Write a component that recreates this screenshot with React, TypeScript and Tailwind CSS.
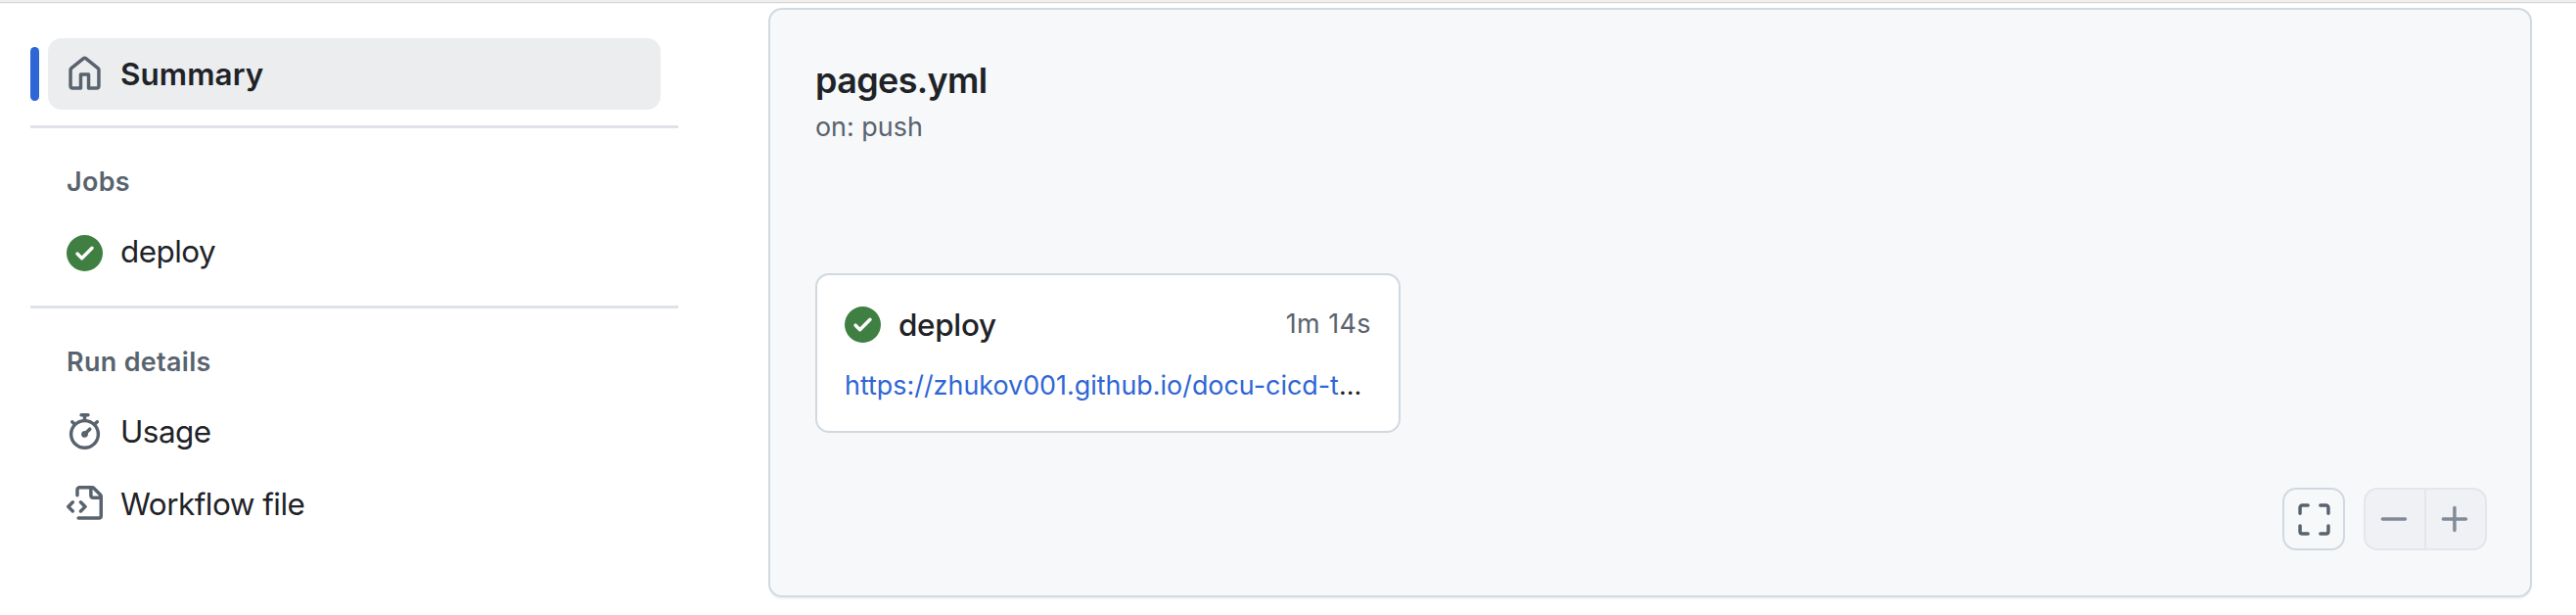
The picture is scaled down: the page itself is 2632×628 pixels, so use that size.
import type { ReactNode } from "react";

const paths = {
  home: "M6.906.664a1.749 1.749 0 0 1 2.187 0l5.25 4.2c.415.332.657.835.657 1.367v7.019A1.75 1.75 0 0 1 13.25 15h-3.5a.75.75 0 0 1-.75-.75V9H7v5.25a.75.75 0 0 1-.75.75h-3.5A1.75 1.75 0 0 1 1 13.25V6.23c0-.531.242-1.034.657-1.366l5.25-4.2Zm1.25 1.171a.25.25 0 0 0-.312 0l-5.25 4.2a.25.25 0 0 0-.094.196v7.019c0 .138.112.25.25.25H5.5V8.25a.75.75 0 0 1 .75-.75h3.5a.75.75 0 0 1 .75.75v5.25h2.75a.25.25 0 0 0 .25-.25V6.23a.25.25 0 0 0-.094-.195Z",
  check: "M8 16A8 8 0 1 1 8 0a8 8 0 0 1 0 16Zm3.78-9.72a.751.751 0 0 0-.018-1.042.751.751 0 0 0-1.042-.018L6.75 9.19 5.28 7.72a.751.751 0 0 0-1.042.018.751.751 0 0 0-.018 1.042l2 2a.75.75 0 0 0 1.06 0Z",
  stopwatch: "M5.75.75A.75.75 0 0 1 6.5 0h3a.75.75 0 0 1 0 1.5h-.75v1l-.001.041a6.724 6.724 0 0 1 3.464 1.435l.007-.006.75-.75a.749.749 0 0 1 1.275.326.749.749 0 0 1-.215.734l-.75.75-.006.007a6.75 6.75 0 1 1-10.548 0L2.72 5.03l-.75-.75a.751.751 0 0 1 .018-1.042.751.751 0 0 1 1.042-.018l.75.75.007.006A6.72 6.72 0 0 1 7.25 2.541V1.5H6.5a.75.75 0 0 1-.75-.75ZM8 14.5a5.25 5.25 0 1 0-.001-10.501A5.25 5.25 0 0 0 8 14.5Zm.389-6.7 1.33-1.33a.75.75 0 1 1 1.061 1.06L9.45 8.861A1.503 1.503 0 0 1 8 10.75a1.499 1.499 0 1 1 .389-2.95Z",
  fileCode: "M4 1.75C4 .784 4.784 0 5.75 0h5.586c.464 0 .909.184 1.237.513l2.914 2.914c.329.328.513.773.513 1.237v8.586A1.75 1.75 0 0 1 14.25 15h-9a.75.75 0 0 1 0-1.5h9a.25.25 0 0 0 .25-.25V6h-2.75A1.75 1.75 0 0 1 10 4.25V1.5H5.75a.25.25 0 0 0-.25.25v2.5a.75.75 0 0 1-1.5 0Zm1.72 4.97a.75.75 0 0 1 1.06 0l2 2a.75.75 0 0 1 0 1.06l-2 2a.749.749 0 0 1-1.275-.326.749.749 0 0 1 .215-.734l1.47-1.47-1.47-1.47a.75.75 0 0 1 0-1.06ZM3.28 7.78 1.81 9.25l1.47 1.47a.751.751 0 0 1-.018 1.042.751.751 0 0 1-1.042.018l-2-2a.75.75 0 0 1 0-1.06l2-2a.751.751 0 0 1 1.042.018.751.751 0 0 1 .018 1.042Zm8.22-6.218V4.25c0 .138.112.25.25.25h2.688l-.011-.013-2.914-2.914-.013-.011Z",
  screenFull: "M1.75 10a.75.75 0 0 1 .75.75v2.5c0 .138.112.25.25.25h2.5a.75.75 0 0 1 0 1.5h-2.5A1.75 1.75 0 0 1 1 13.25v-2.5a.75.75 0 0 1 .75-.75Zm12.5 0a.75.75 0 0 1 .75.75v2.5A1.75 1.75 0 0 1 13.25 15h-2.5a.75.75 0 0 1 0-1.5h2.5a.25.25 0 0 0 .25-.25v-2.5a.75.75 0 0 1 .75-.75ZM2.75 2.5a.25.25 0 0 0-.25.25v2.5a.75.75 0 0 1-1.5 0v-2.5C1 1.784 1.784 1 2.75 1h2.5a.75.75 0 0 1 0 1.5ZM10 1.75a.75.75 0 0 1 .75-.75h2.5c.966 0 1.75.784 1.75 1.75v2.5a.75.75 0 0 1-1.5 0v-2.5a.25.25 0 0 0-.25-.25h-2.5a.75.75 0 0 1-.75-.75Z",
  dash: "M2 7.75A.75.75 0 0 1 2.75 7h10a.75.75 0 0 1 0 1.5h-10A.75.75 0 0 1 2 7.75Z",
  plus: "M7.75 2a.75.75 0 0 1 .75.75V7h4.25a.75.75 0 0 1 0 1.5H8.5v4.25a.75.75 0 0 1-1.5 0V8.5H2.75a.75.75 0 0 1 0-1.5H7V2.75A.75.75 0 0 1 7.75 2Z",
};

function Icon({ name, className }: { name: keyof typeof paths; className: string }) {
  return (
    <svg viewBox="0 0 16 16" fill="currentColor" aria-hidden="true" className={`size-[37px] shrink-0 ${className}`}>
      <path d={paths[name]} />
    </svg>
  );
}

function NavItem({ icon, iconClass, textClass, children }: { icon: keyof typeof paths; iconClass: string; textClass: string; children: ReactNode }) {
  return (
    <a className="ml-[18px] flex h-[73px] w-[626px] items-center gap-[18px] rounded-[14px] pl-[19px] text-[31.4px] tracking-[-0.5px]">
      <Icon name={icon} className={iconClass} />
      <span className={textClass}>{children}</span>
    </a>
  );
}

function Heading({ children }: { children: ReactNode }) {
  return <h3 className="ml-[37px] h-[36px] text-[26.9px] leading-[36px] font-semibold tracking-[0.35px] text-[#59636e]">{children}</h3>;
}

function Sidebar() {
  return (
    <nav className="ml-[31px] w-[662px] shrink-0 pt-[35px]">
      <div className="flex items-center gap-[9px]">
        <span className="h-[55px] w-[9px] rounded-full bg-[#2f66d5]" />
        <a className="flex h-[73px] w-[626px] items-center gap-[18px] rounded-[14px] bg-[#ecedef] pl-[19px] text-[31.4px] font-semibold tracking-[0.1px]">
          <Icon name="home" className="text-[#59636e]" />
          <span className="pt-0.5">Summary</span>
        </a>
      </div>
      <hr className="mt-4 h-[3px] border-0 bg-[#dfe2e8]" />
      <div className="h-[181px] pt-[36px]">
        <Heading>Jobs</Heading>
        <div className="pt-[19px]">
          <NavItem icon="check" iconClass="text-[#3f7f42]" textClass="pb-0.5">deploy</NavItem>
        </div>
      </div>
      <hr className="h-[3px] border-0 bg-[#dfe2e8]" />
      <div className="pt-[36px]">
        <Heading>Run details</Heading>
        <div className="flex flex-col gap-px pt-[17px]">
          <NavItem icon="stopwatch" iconClass="text-[#59636e]" textClass="pt-0.5">Usage</NavItem>
          <NavItem icon="fileCode" iconClass="text-[#59636e]" textClass="pt-0.5">Workflow file</NavItem>
        </div>
      </div>
    </nav>
  );
}

function JobCard() {
  return (
    <div className="mt-[129px] h-[163px] w-[598px] rounded-[14px] border-2 border-[#d1d9e0] bg-white pt-[32px] pr-[28px] pl-[28px]">
      <div className="flex h-[37px] items-center">
        <Icon name="check" className="text-[#3f7f42]" />
        <span className="ml-[18px] pt-[3px] text-[31.4px] font-medium tracking-[-0.3px]">deploy</span>
        <span className="ml-auto pb-0.5 text-[26.9px] tracking-[0.45px] text-[#59636e]">1m 14s</span>
      </div>
      <div className="mt-[23px] text-[26.9px] leading-[40px] whitespace-nowrap">
        <a className="text-[#2f66d5]">https://zhukov001.github.io/docu-cicd-t</a>…
      </div>
    </div>
  );
}

function Controls() {
  return (
    <div className="mt-auto mb-[46px] flex justify-end gap-[19px]">
      <button className="flex size-16 items-center justify-center rounded-[14px] border-2 border-[#d1d9e0] text-[#59636e]">
        <Icon name="screenFull" className="" />
      </button>
      <div className="flex h-16 w-[126px] rounded-[14px] border-2 border-[#e4e6ea] bg-[#eff1f5] text-[#818b98]">
        <button className="flex w-[62px] items-center justify-center border-r-2 border-[#e4e6ea] pr-0.5">
          <Icon name="dash" className="" />
        </button>
        <button className="flex w-[60px] items-center justify-center pr-0.5">
          <Icon name="plus" className="" />
        </button>
      </div>
    </div>
  );
}

export default function App() {
  return (
    <div className="flex h-[628px] w-[2632px] flex-col overflow-hidden bg-white font-['Inter',sans-serif] text-[#1f2328]">
      <div className="h-1 shrink-0 border-b border-[#f5f5f5] bg-[#efefef]">
        <div className="mt-0.5 h-px bg-[#d6d6d6]" />
      </div>
      <div className="flex">
        <Sidebar />
        <main className="mt-1 ml-[92px] flex h-[602px] w-[1802px] flex-col rounded-[14px] border-2 border-[#d1d9e0] bg-[#f6f8fa] pt-[47px] pr-[44px] pl-[46px] shadow-[0_2px_1px_rgba(31,35,40,0.05)]">
          <h2 className="text-[35.9px] leading-[50px] font-semibold tracking-[-0.6px]">pages.yml</h2>
          <p className="mt-px h-[42px] text-[26.9px] leading-[42px] text-[#59636e]">on: push</p>
          <JobCard />
          <Controls />
        </main>
      </div>
    </div>
  );
}
